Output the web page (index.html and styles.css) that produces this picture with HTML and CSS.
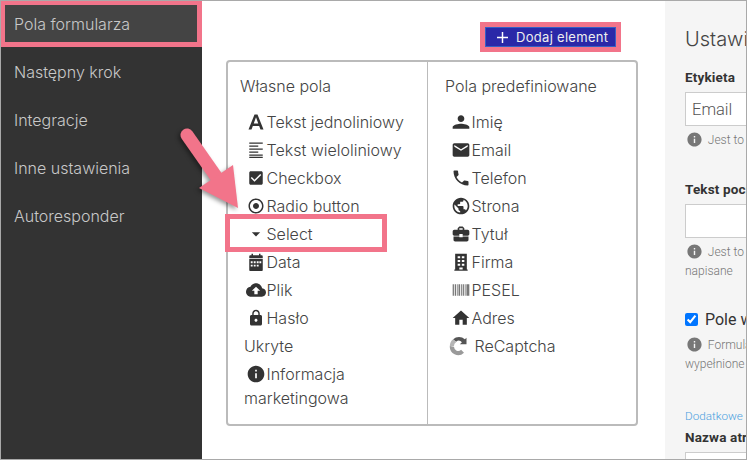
FILE: index.html
```html
<!DOCTYPE html>
<html lang="pl">
<head>
<meta charset="UTF-8">
<title>Pola formularza</title>
<link rel="stylesheet" href="styles.css">
</head>
<body>
<div class="app">
  <nav class="sidebar">
    <a class="side-link active" href="#">Pola formularza</a>
    <a class="side-link" href="#">Następny krok</a>
    <a class="side-link" href="#">Integracje</a>
    <a class="side-link" href="#">Inne ustawienia</a>
    <a class="side-link" href="#">Autoresponder</a>
  </nav>

  <main class="main">
    <div class="toolbar">
      <button class="add-button">
        <svg class="plus" viewBox="0 0 12 12"><path d="M5.200 0h1.600v5.200H12v1.600H6.800V12H5.200V6.800H0V5.200h5.200z"/></svg>
        Dodaj element
      </button>
    </div>

    <div class="fields-box">
      <section class="fields-col own">
        <h2 class="col-title">Własne pola</h2>
        <ul class="field-list">
          <li class="field"><svg class="icon" viewBox="0 0 24 24"><path fill-rule="evenodd" d="M10 2h4l8 20h-4l-1.800-4.800H7.800L6 22H2zM9 14h6l-3-8.200z"/></svg>Tekst jednoliniowy</li>
          <li class="field"><svg class="icon" viewBox="0 0 24 24"><path d="M3 2h18v1.800H3zM3 6h12v1.800H3zM3 10h18v1.800H3zM3 14h12v1.800H3zM3 18h18v1.800H3zM3 21h18v1.500H3z"/></svg>Tekst wieloliniowy</li>
          <li class="field"><svg class="icon" viewBox="0 0 24 24"><path d="M19 3H5c-1.110 0-2 .9-2 2v14c0 1.100.89 2 2 2h14c1.110 0 2-.9 2-2V5c0-1.100-.89-2-2-2zm-9 14l-5-5 1.410-1.410L10 14.170l7.590-7.590L19 8l-9 9z"/></svg>Checkbox</li>
          <li class="field"><svg class="icon" viewBox="0 0 24 24"><path d="M12 8c-2.210 0-4 1.790-4 4s1.790 4 4 4 4-1.790 4-4-1.790-4-4-4zm0-6C6.480 2 2 6.480 2 12s4.480 10 10 10 10-4.480 10-10S17.520 2 12 2zm0 18c-4.420 0-8-3.580-8-8s3.580-8 8-8 8 3.580 8 8-3.580 8-8 8z"/></svg>Radio button</li>
          <li class="field marked"><svg class="icon big" viewBox="0 0 24 24"><path d="M7 10l5 5 5-5z"/></svg>Select</li>
          <li class="field"><svg class="icon" viewBox="0 0 24 24"><path fill-rule="evenodd" d="M18 3V1h-2v2H8V1H6v2H4.500C3.700 3 3 3.700 3 4.500V7h18V4.500C21 3.700 20.300 3 19.500 3zM3 8v14.500c0 .8.7 1.500 1.500 1.500h15c.8 0 1.500-.7 1.500-1.500V8zM5 11h2.500v2.500H5zM9 11h2.500v2.500H9zM13 11h2.500v2.500H13zM16.500 11H19v2.500h-2.500zM5 15.500h2.500V18H5zM9 15.500h2.500V18H9zM13 15.500h2.500V18H13z"/></svg>Data</li>
          <li class="field"><svg class="icon big" viewBox="0 0 24 24"><path d="M19.350 10.040C18.670 6.590 15.640 4 12 4 9.110 4 6.600 5.640 5.350 8.040 2.340 8.360 0 10.910 0 14c0 3.310 2.690 6 6 6h13c2.760 0 5-2.240 5-5 0-2.640-2.050-4.780-4.650-4.960zM14 13v4h-4v-4H7l5-5 5 5h-3z"/></svg>Plik</li>
          <li class="field"><svg class="icon" viewBox="0 0 24 24"><path d="M18 8h-1V6c0-2.760-2.240-5-5-5S7 3.240 7 6v2H6c-1.100 0-2 .9-2 2v10c0 1.100.9 2 2 2h12c1.100 0 2-.9 2-2V10c0-1.100-.9-2-2-2zm-6 9c-1.100 0-2-.9-2-2s.9-2 2-2 2 .9 2 2-.9 2-2 2zm3.100-9H8.900V6c0-1.710 1.390-3.100 3.100-3.100 1.710 0 3.100 1.390 3.100 3.100v2z"/></svg>Hasło</li>
          <li class="field plain">Ukryte</li>
          <li class="field"><svg class="icon big" viewBox="0 0 24 24"><path d="M12 2C6.480 2 2 6.480 2 12s4.480 10 10 10 10-4.480 10-10S17.520 2 12 2zm1 15h-2v-6h2v6zm0-8h-2V7h2v2z"/></svg>Informacja</li>
          <li class="field plain wrapped">marketingowa</li>
        </ul>
      </section>

      <section class="fields-col">
        <h2 class="col-title">Pola predefiniowane</h2>
        <ul class="field-list">
          <li class="field"><svg class="icon big" viewBox="0 0 24 24"><path d="M12 12c2.210 0 4-1.790 4-4s-1.790-4-4-4-4 1.790-4 4 1.790 4 4 4zm0 2c-2.670 0-10 1.340-10 4v2h20v-2c0-2.660-7.330-4-10-4z"/></svg>Imię</li>
          <li class="field"><svg class="icon big" viewBox="0 0 24 24"><path d="M20 4H4c-1.100 0-1.990.9-1.990 2L2 18c0 1.100.9 2 2 2h16c1.100 0 2-.9 2-2V6c0-1.100-.9-2-2-2zm0 4l-8 5-8-5V6l8 5 8-5v2z"/></svg>Email</li>
          <li class="field"><svg class="icon big" viewBox="0 0 24 24"><path d="M6.620 10.790c1.440 2.830 3.760 5.140 6.590 6.590l2.200-2.200c.27-.27.67-.36 1.020-.24 1.120.37 2.330.57 3.570.57.55 0 1 .45 1 1V20c0 .55-.45 1-1 1-9.390 0-17-7.610-17-17 0-.55.45-1 1-1h3.500c.55 0 1 .45 1 1 0 1.250.2 2.450.57 3.570.11.35.03.74-.25 1.020l-2.200 2.200z"/></svg>Telefon</li>
          <li class="field"><svg class="icon big" viewBox="0 0 24 24"><path d="M12 2C6.480 2 2 6.480 2 12s4.480 10 10 10 10-4.480 10-10S17.520 2 12 2zm-1 17.930c-3.950-.49-7-3.850-7-7.930 0-.62.08-1.210.21-1.790L9 15v1c0 1.100.9 2 2 2v1.930zm6.900-2.540c-.26-.81-1-1.390-1.900-1.390h-1v-3c0-.55-.45-1-1-1H8v-2h2c.55 0 1-.45 1-1V7h2c1.100 0 2-.9 2-2v-.41c2.930 1.190 5 4.060 5 7.410 0 2.080-.8 3.970-2.100 5.390z"/></svg>Strona</li>
          <li class="field"><svg class="icon big" viewBox="0 0 24 24"><path d="M10 16v-1H3.010L3 19c0 1.110.89 2 2 2h14c1.110 0 2-.89 2-2v-4h-7v1h-4zm10-9h-4.010V5l-2-2h-4l-2 2v2H4c-1.100 0-2 .9-2 2v3c0 1.110.89 2 2 2h6v-2h4v2h6c1.100 0 2-.9 2-2V9c0-1.100-.9-2-2-2zm-6 0h-4V5h4v2z"/></svg>Tytuł</li>
          <li class="field"><svg class="icon big" viewBox="0 0 24 24"><path fill-rule="evenodd" d="M5 2h14v19h1v1.500H4V21h1zM8 5v2.500h3V5zM13 5v2.500h3V5zM8 9.500V12h3V9.500zM13 9.500V12h3V9.500zM8 14v2.500h3V14zM13 14v2.500h3V14zM10 18.500V21h4v-2.500z"/></svg>Firma</li>
          <li class="field"><svg class="icon big barcode" viewBox="0 0 24 24"><path d="M2 5h1.500v14H2zM4.500 5H6v14H4.500zM7 5h1v14H7zM9 5h2v14H9zM12 5h1v14h-1zM14 5h1.500v14H14zM16.500 5h1v14h-1zM18.500 5H22v14h-3.500z"/></svg>PESEL</li>
          <li class="field"><svg class="icon big" viewBox="0 0 24 24"><path d="M10 20v-6h4v6h5v-8h3L12 3 2 12h3v8z"/></svg>Adres</li>
          <li class="field captcha"><svg class="icon big" viewBox="0 0 24 24"><path fill="#9a9a9a" d="M1 12a10 10 0 0 0 17 8l-3.500-3.500A5 5 0 0 1 6 13z"/><path fill="#b5b5b5" d="M1 12a10 10 0 0 1 4-8l3.500 3.500A5 5 0 0 0 6 12z"/><path fill="#555" d="M5 4a10 10 0 0 1 14 0l2-2v8h-8l2.500-2.500a5 5 0 0 0-7-.5z"/></svg>ReCaptcha</li>
        </ul>
      </section>
    </div>
  </main>

  <aside class="settings">
    <h2 class="settings-title">Ustawienia pola</h2>

    <label class="set-label">Etykieta</label>
    <div class="set-input">Email</div>
    <p class="hint"><svg class="hint-icon" viewBox="0 0 24 24"><path d="M12 2C6.480 2 2 6.480 2 12s4.480 10 10 10 10-4.480 10-10S17.520 2 12 2zm1 15h-2v-6h2v6zm0-8h-2V7h2v2z"/></svg>Jest to nazwa pola</p>

    <label class="set-label second">Tekst początkowy</label>
    <div class="set-input"></div>
    <p class="hint"><svg class="hint-icon" viewBox="0 0 24 24"><path d="M12 2C6.480 2 2 6.480 2 12s4.480 10 10 10 10-4.480 10-10S17.520 2 12 2zm1 15h-2v-6h2v6zm0-8h-2V7h2v2z"/></svg>Jest to tekst w polu<br>napisane</p>

    <label class="required"><input type="checkbox" class="required-box" checked>Pole wymagane</label>
    <p class="hint after-check"><svg class="hint-icon" viewBox="0 0 24 24"><path d="M12 2C6.480 2 2 6.480 2 12s4.480 10 10 10 10-4.480 10-10S17.520 2 12 2zm1 15h-2v-6h2v6zm0-8h-2V7h2v2z"/></svg>Formularz wymaga<br>wypełnione</p>

    <a class="extra-link" href="#">Dodatkowe ustawienia</a>
    <label class="set-label third">Nazwa atrybutu</label>
    <div class="set-input"></div>
  </aside>

  <svg class="pointer" viewBox="0 0 747 460">
    <path class="pointer-line" d="M187 135L222 185"/>
    <path class="pointer-head" d="M199 188L233 165L238 208z"/>
  </svg>
</div>
</body>
</html>
```

FILE: styles.css
```css
* {
  margin: 0;
  padding: 0;
  box-sizing: border-box;
}

body {
  font-family: "Inter", "Liberation Sans", sans-serif;
  background-color: #fff;
  color: #444;
}

.app {
  position: relative;
  display: flex;
  width: 747px;
  height: 460px;
  overflow: hidden;
  border: 1px solid #a9a9a9;
}

/* left menu */
.sidebar {
  flex: none;
  width: 201px;
  background-color: #333;
}

.side-link {
  display: flex;
  align-items: center;
  height: 48px;
  padding-left: 13px;
  font-size: 16px;
  font-weight: 300;
  color: #c8c8c8;
  text-decoration: none;
}

.side-link.active {
  height: 47px;
  margin: -1px 0 1px -1px;
  padding-left: 9px;
  border: 5px solid #f2748a;
  background-color: #444;
}

/* middle */
.main {
  flex: none;
  width: 463px;
  padding: 21px 27px 0 24px;
}

.toolbar {
  display: flex;
  justify-content: flex-end;
  padding-right: 17px;
}

.add-button {
  display: flex;
  align-items: center;
  width: 141px;
  height: 30px;
  padding-left: 12px;
  border: 5px solid #f2748a;
  background-color: #2a28a8;
  box-shadow: inset 0 0 0 1px #3560c4;
  color: #eee;
  font-family: inherit;
  font-size: 13px;
  letter-spacing: 0.3px;
}

.plus {
  width: 11px;
  height: 11px;
  margin-right: 8px;
  fill: #fff;
}

.fields-box {
  display: flex;
  width: 412px;
  height: 366px;
  margin-top: 8px;
  border: 2px solid #bbb;
  border-radius: 4px;
}

.fields-col {
  flex: 1;
  padding: 12px 0 0 17px;
}

.fields-col.own {
  flex: none;
  width: 200px;
  padding-left: 12px;
  border-right: 1px solid #bbb;
}

.col-title {
  height: 24px;
  margin-bottom: 10px;
  font-size: 16px;
  font-weight: 300;
  line-height: 24px;
  color: #444;
}

.field-list {
  list-style: none;
}

.field {
  position: relative;
  display: flex;
  align-items: center;
  height: 28px;
  padding-left: 5px;
  font-size: 16px;
  font-weight: 300;
  color: #444;
  white-space: nowrap;
}

.field.plain {
  padding-left: 4px;
}

.field.wrapped {
  height: 24px;
  margin-top: -2px;
}

/* pink frame around the row the arrow points at */
.field.marked::after {
  content: "";
  box-sizing: border-box;
  position: absolute;
  left: -15px;
  top: -6px;
  width: 162px;
  height: 38px;
  border: 5px solid #f2748a;
}

.icon {
  flex: none;
  width: 18px;
  height: 18px;
  margin: 0 1.750px;
  fill: #333;
}

.icon.big {
  width: 20px;
  height: 20px;
  margin: 0 .750px;
}

.icon.barcode {
  fill: #777;
}

.field.captcha .icon {
  margin: 0 6px 0 -1.500px;
}

/* right settings panel, cut off by the window */
.settings {
  flex: none;
  width: 300px;
  padding: 24px 0 0 20px;
  background-color: #f5f5f5;
  white-space: nowrap;
}

.settings-title {
  height: 28px;
  margin-bottom: 16px;
  font-size: 20px;
  font-weight: 300;
  line-height: 28px;
  color: #444;
}

.set-label {
  display: block;
  height: 16px;
  margin-bottom: 7px;
  font-family: "Roboto", sans-serif;
  font-size: 13.500px;
  font-weight: 700;
  line-height: 16px;
  letter-spacing: 0.15px;
  color: #333;
}

.set-label.second {
  margin-top: 31px;
}

.set-label.third {
  margin-top: 5px;
}

.set-input {
  display: flex;
  align-items: center;
  height: 34px;
  padding-left: 6px;
  border: 1px solid #ccc;
  background-color: #fff;
  font-family: "Roboto", sans-serif;
  font-size: 16.500px;
  font-weight: 300;
  color: #555;
}

.hint {
  margin-top: 5px;
  font-family: "Roboto", sans-serif;
  font-size: 12px;
  font-weight: 300;
  line-height: 19px;
  color: #777;
}

.hint.after-check {
  margin-top: 7px;
}

.hint-icon {
  width: 17px;
  height: 17px;
  margin: 0 4.500px -4px 1.300px;
  fill: #777;
}

.required {
  display: flex;
  align-items: center;
  height: 20px;
  margin-top: 28px;
  font-family: "Roboto", sans-serif;
  font-size: 16px;
  color: #333;
}

.required-box {
  width: 13px;
  height: 13px;
  margin-right: 7px;
}

.extra-link {
  display: block;
  height: 16px;
  margin-top: 34px;
  font-family: "Roboto", sans-serif;
  font-size: 11.700px;
  font-weight: 300;
  line-height: 16px;
  color: #4a9fe0;
  text-decoration: none;
}

/* big arrow drawn on top of the screenshot */
.pointer {
  position: absolute;
  left: -1px;
  top: -1px;
  width: 747px;
  height: 460px;
  filter: drop-shadow(-2px 2px 2px rgba(0, 0, 0, 0.4));
  pointer-events: none;
}

.pointer-line {
  fill: none;
  stroke: #f2748a;
  stroke-width: 13;
  stroke-linecap: round;
}

.pointer-head {
  fill: #f2748a;
}
```
